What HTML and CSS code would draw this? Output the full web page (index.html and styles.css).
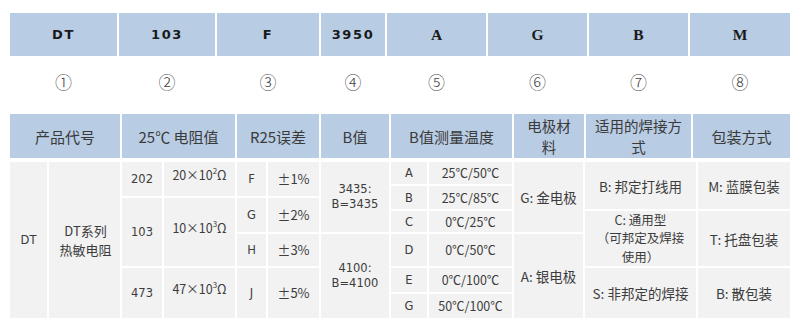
FILE: index.html
```html
<!DOCTYPE html>
<html lang="zh-CN">
<head>
<meta charset="utf-8">
<title>DT系列热敏电阻 命名规则</title>
<link rel="stylesheet" href="styles.css">
</head>
<body>
<div class="page">
  <div class="code-bar">
    <div class="code mono">DT</div>
    <div class="code mono">103</div>
    <div class="code mono">F</div>
    <div class="code mono">3950</div>
    <div class="code serif">A</div>
    <div class="code serif">G</div>
    <div class="code serif">B</div>
    <div class="code serif">M</div>
  </div>
  <div class="nums">
    <div class="num">①</div>
    <div class="num">②</div>
    <div class="num">③</div>
    <div class="num">④</div>
    <div class="num">⑤</div>
    <div class="num">⑥</div>
    <div class="num">⑦</div>
    <div class="num">⑧</div>
  </div>
  <div class="head">
    <div class="hcell">产品代号</div>
    <div class="hcell">25℃ 电阻值</div>
    <div class="hcell">R25误差</div>
    <div class="hcell">B值</div>
    <div class="hcell">B值测量温度</div>
    <div class="hcell two">电极材<br>料</div>
    <div class="hcell two">适用的焊接方<br>式</div>
    <div class="hcell">包装方式</div>
  </div>
  <div class="grid">
    <div class="cell k1 r1-8 v">DT</div>
    <div class="cell k2 r1-8 cjk two-line">DT系列<br>热敏电阻</div>

    <div class="cell k3 r1-3 v">202</div>
    <div class="cell k4 r1-3 res">20×10<span class="sup">2</span>Ω</div>
    <div class="cell k3 r3-6 v">103</div>
    <div class="cell k4 r3-6 res">10×10<span class="sup">3</span>Ω</div>
    <div class="cell k3 r6-8 v">473</div>
    <div class="cell k4 r6-8 res">47×10<span class="sup">3</span>Ω</div>

    <div class="cell k5 r1-3 v">F</div>
    <div class="cell k6 r1-3 pct">±1%</div>
    <div class="cell k5 r3-5 v">G</div>
    <div class="cell k6 r3-5 pct">±2%</div>
    <div class="cell k5 r5-6 v">H</div>
    <div class="cell k6 r5-6 pct">±3%</div>
    <div class="cell k5 r6-8 v">J</div>
    <div class="cell k6 r6-8 pct">±5%</div>

    <div class="cell k7 r1-5 v bval">3435:<br>B=3435</div>
    <div class="cell k7 r5-8 v bval">4100:<br>B=4100</div>

    <div class="cell k8 r1-2 v">A</div>
    <div class="cell k9 r1-2 temp">25℃/50℃</div>
    <div class="cell k8 r2-4 v">B</div>
    <div class="cell k9 r2-4 temp">25℃/85℃</div>
    <div class="cell k8 r4-5 v">C</div>
    <div class="cell k9 r4-5 temp">0℃/25℃</div>
    <div class="cell k8 r5-6 v">D</div>
    <div class="cell k9 r5-6 temp">0℃/50℃</div>
    <div class="cell k8 r6-7 v">E</div>
    <div class="cell k9 r6-7 temp">0℃/100℃</div>
    <div class="cell k8 r7-8 v">G</div>
    <div class="cell k9 r7-8 temp">50℃/100℃</div>

    <div class="cell k10 r1-5 cjk">G: 金电极</div>
    <div class="cell k10 r5-8 cjk">A: 银电极</div>

    <div class="cell k11 r1-4 cjk">B: 邦定打线用</div>
    <div class="cell k11 r4-6 cjk three-line">C: 通用型<br>（可邦定及焊接<br>使用）</div>
    <div class="cell k11 r6-8 cjk">S: 非邦定的焊接</div>

    <div class="cell k12 r1-4 cjk">M: 蓝膜包装</div>
    <div class="cell k12 r4-6 cjk">T: 托盘包装</div>
    <div class="cell k12 r6-8 cjk">B: 散包装</div>
  </div>
</div>
</body>
</html>
```

FILE: styles.css
```css
html, body {
  margin: 0;
  padding: 0;
  background: #ffffff;
}

.page {
  padding: 13px 10px 0 10px;
  width: 780px;
  font-family: "Noto Sans CJK SC", sans-serif;
  color: #333333;
}

.code-bar {
  display: grid;
  grid-template-columns: 107px 96px 102px 64px 99px 99px 99px 100px;
  column-gap: 2px;
  height: 43px;
  background: #ffffff;
}

.code {
  background: #b8cce4;
  display: flex;
  align-items: center;
  justify-content: center;
  color: #1a1a1a;
}

.code.mono {
  font-family: "DejaVu Sans", sans-serif;
  font-weight: bold;
  font-size: 13px;
  letter-spacing: 1.6px;
}

.code.serif {
  font-family: "Liberation Serif", serif;
  font-weight: bold;
  font-size: 15.5px;
}

.nums {
  display: grid;
  grid-template-columns: 107px 96px 102px 64px 99px 99px 99px 100px;
  column-gap: 2px;
  height: 58px;
}

.num {
  display: flex;
  justify-content: center;
  align-items: flex-start;
  padding-top: 15px;
  line-height: 22px;
  font-size: 17px;
  font-weight: 300;
  color: #444444;
  font-family: "Noto Sans CJK SC", "DejaVu Sans", sans-serif;
}

.head {
  display: grid;
  grid-template-columns: 110px 113px 82px 68px 121px 70px 105px 97px;
  column-gap: 2px;
  height: 44px;
}

.hcell {
  background: #b8cce4;
  display: flex;
  align-items: center;
  justify-content: center;
  text-align: center;
  font-size: 15px;
  color: #3a3a3a;
  line-height: 19px;
}

.hcell.two {
  font-size: 14.5px;
  line-height: 21px;
}

.grid {
  margin-top: 4px;
  display: grid;
  grid-template-columns: 37px 71px 40px 71px 29px 51px 68px 36px 83px 69px 111px 92px;
  grid-template-rows: 22px 10px 11px 21px 32px 24px 24px;
  gap: 2px;
  background: #ffffff;
}

.cell {
  background: #f2f2f2;
  display: flex;
  align-items: center;
  justify-content: center;
  text-align: center;
  color: #3c3c3c;
  font-size: 13px;
  line-height: 16px;
}

.v {
  font-family: "DejaVu Sans", sans-serif;
  font-size: 11.5px;
}

.cjk {
  font-size: 13.5px;
  line-height: 20px;
}

.two-line {
  font-size: 13px;
  line-height: 19px;
  padding-left: 2px;
}

.three-line {
  font-size: 12.5px;
  line-height: 18.2px;
}

.res {
  font-size: 12.5px;
  padding-bottom: 8px;
}

.sup {
  font-size: 8px;
  position: relative;
  top: -4px;
}

.pct {
  font-size: 13px;
}

.bval {
  line-height: 15px;
}

.temp {
  font-size: 12.5px;
}

.k1 { grid-column: 1; }
.k2 { grid-column: 2; }
.k3 { grid-column: 3; }
.k4 { grid-column: 4; }
.k5 { grid-column: 5; }
.k6 { grid-column: 6; }
.k7 { grid-column: 7; }
.k8 { grid-column: 8; }
.k9 { grid-column: 9; }
.k10 { grid-column: 10; }
.k11 { grid-column: 11; }
.k12 { grid-column: 12; }

.r1-8 { grid-row: 1 / 8; }
.r1-2 { grid-row: 1 / 2; }
.r1-3 { grid-row: 1 / 3; }
.r1-4 { grid-row: 1 / 4; }
.r1-5 { grid-row: 1 / 5; }
.r2-4 { grid-row: 2 / 4; }
.r3-5 { grid-row: 3 / 5; }
.r3-6 { grid-row: 3 / 6; }
.r4-5 { grid-row: 4 / 5; }
.r4-6 { grid-row: 4 / 6; }
.r5-6 { grid-row: 5 / 6; }
.r5-8 { grid-row: 5 / 8; }
.r6-7 { grid-row: 6 / 7; }
.r6-8 { grid-row: 6 / 8; }
.r7-8 { grid-row: 7 / 8; }
```
